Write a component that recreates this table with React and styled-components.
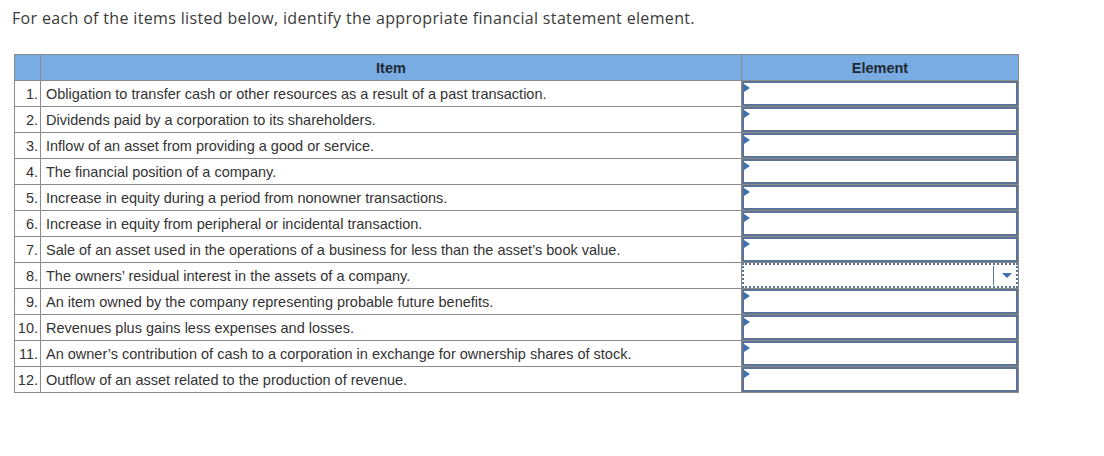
import React from 'react';
import styled, { createGlobalStyle } from 'styled-components';

const GlobalStyle = createGlobalStyle`
  body {
    margin: 0;
    background: #ffffff;
    font-family: "Liberation Sans", Arial, sans-serif;
    color: #333;
  }
`

const Page = styled.div`
  padding: 7px 0 0 12px;
  width: 1104px;
  height: 456px;
  box-sizing: border-box;
`

const Titulo = styled.p`
  margin: 0 0 25px 0;
  font-family: "Open Sans", "Liberation Sans", sans-serif;
  font-size: 16px;
  letter-spacing: 0.34px;
  line-height: 22px;
  color: #3a3a3a;
`

const Tabela = styled.table`
  margin-left: 2px;
  border-collapse: collapse;
  width: 1004px;
  table-layout: fixed;
  font-size: 14.5px;
  th, td {
    border: 1px solid #8a8a8a;
    height: 26px;
    padding: 0;
    box-sizing: border-box;
    line-height: 24px;
  }
  th {
    background-color: #7aace4;
    font-weight: bold;
    color: #1f2a33;
    font-size: 14.5px;
  }
`

const ColNum = styled.col`
  width: 26px;
`
const ColItem = styled.col`
  width: 701px;
`
const ColElement = styled.col`
  width: 277px;
`

const Numero = styled.td`
  text-align: right;
  padding-right: 2px !important;
  color: #333;
`

const Texto = styled.td`
  padding-left: 5px !important;
  color: #333;
  white-space: nowrap;
`

const CelulaElemento = styled.td`
  position: relative;
  padding: 0 !important;
`

const Caixa = styled.div`
  position: relative;
  height: 25px;
  box-sizing: border-box;
  border: 2px ${(p) => (p.$ativo ? 'dotted' : 'solid')} #5b7394;
  background: #fff;
  display: flex;
  justify-content: flex-end;
  align-items: center;
`

const Seta = styled.span`
  position: absolute;
  left: 0;
  top: 1px;
  width: 0;
  height: 0;
  border-top: 4px solid transparent;
  border-bottom: 4px solid transparent;
  border-left: 6px solid #3e6fae;
`

const Separador = styled.span`
  width: 1px;
  height: 19px;
  background: #5b7394;
  margin-right: 8px;
`

const Abrir = styled.span`
  width: 0;
  height: 0;
  border-left: 5px solid transparent;
  border-right: 5px solid transparent;
  border-top: 5px solid #3e6fae;
  margin-right: 4px;
`

const itens = [
  'Obligation to transfer cash or other resources as a result of a past transaction.',
  'Dividends paid by a corporation to its shareholders.',
  'Inflow of an asset from providing a good or service.',
  'The financial position of a company.',
  'Increase in equity during a period from nonowner transactions.',
  'Increase in equity from peripheral or incidental transaction.',
  'Sale of an asset used in the operations of a business for less than the asset\u2019s book value.',
  'The owners\u2019 residual interest in the assets of a company.',
  'An item owned by the company representing probable future benefits.',
  'Revenues plus gains less expenses and losses.',
  'An owner\u2019s contribution of cash to a corporation in exchange for ownership shares of stock.',
  'Outflow of an asset related to the production of revenue.',
]

export default function App() {
  return (
    <Page>
      <GlobalStyle />
      <Titulo>For each of the items listed below, identify the appropriate financial statement element.</Titulo>
      <Tabela>
        <colgroup>
          <ColNum />
          <ColItem />
          <ColElement />
        </colgroup>
        <thead>
          <tr>
            <th></th>
            <th>Item</th>
            <th>Element</th>
          </tr>
        </thead>
        <tbody>
          {itens.map((item, index) => {
            const ativo = index === 7
            return (
              <tr key={index}>
                <Numero>{index + 1}.</Numero>
                <Texto>{item}</Texto>
                <CelulaElemento>
                  <Caixa $ativo={ativo}>
                    {ativo ? (
                      <>
                        <Separador />
                        <Abrir />
                      </>
                    ) : (
                      <Seta />
                    )}
                  </Caixa>
                </CelulaElemento>
              </tr>
            )
          })}
        </tbody>
      </Tabela>
    </Page>
  );
}
